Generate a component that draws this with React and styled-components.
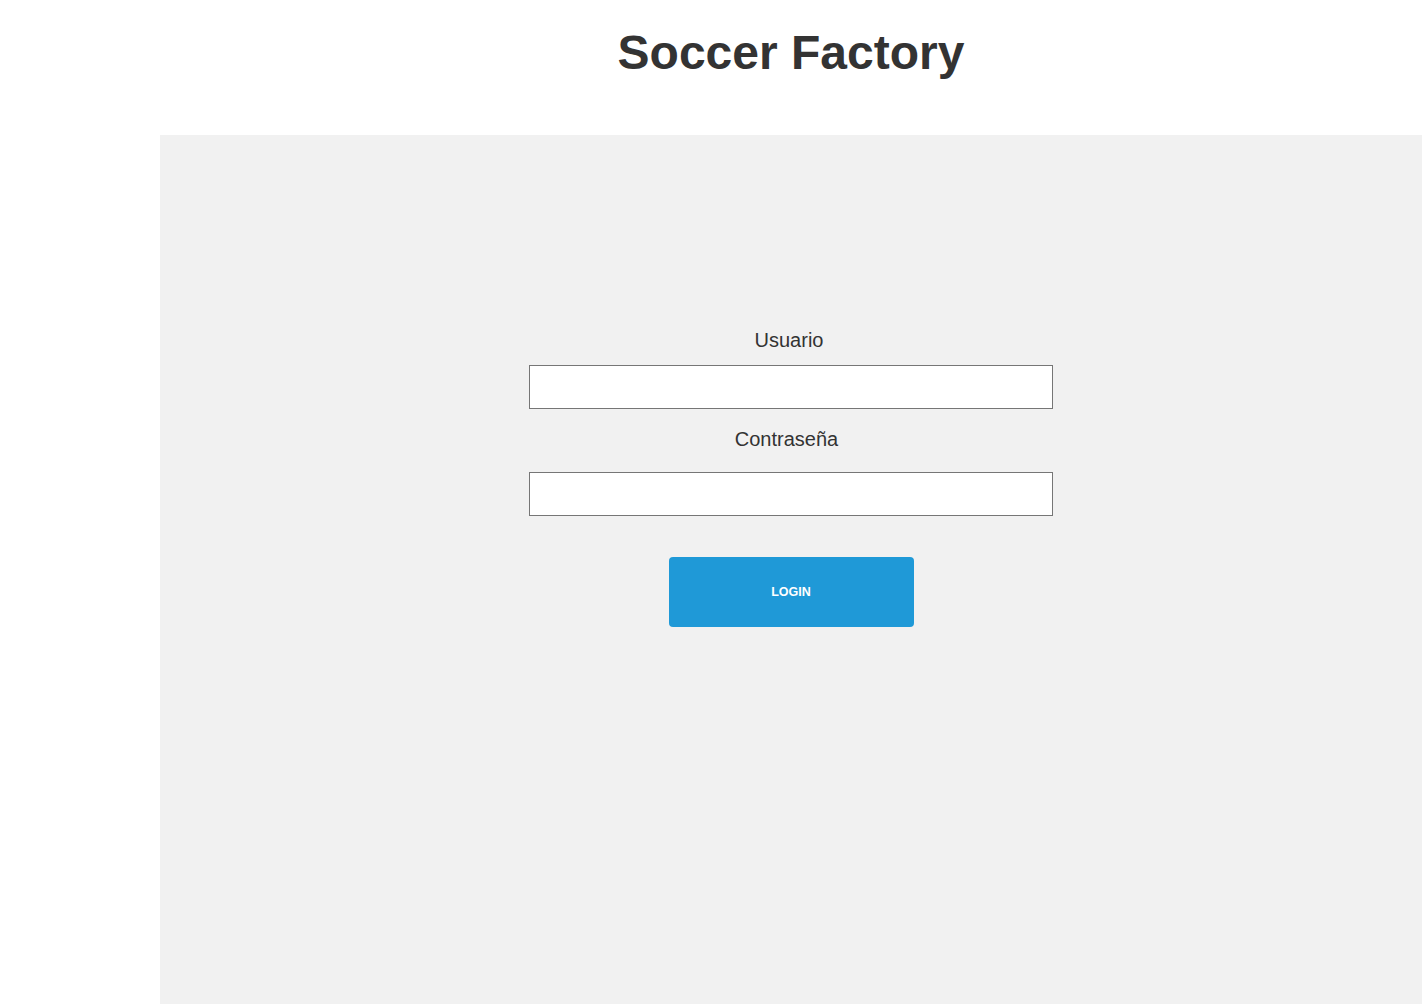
import React from "react";
import styled, { createGlobalStyle } from "styled-components";

const GlobalStyle = createGlobalStyle`
  html, body {
    margin: 0;
    padding: 0;
    background: #ffffff;
    font-family: "Liberation Sans", Arial, sans-serif;
    color: #333333;
  }
  * { box-sizing: border-box; }
`;

const Page = styled.div`
  display: grid;
  grid-template-columns: 160px 1fr;
  min-height: 100vh;
`;

const Sidebar = styled.aside`
  background: #ffffff;
`;

const Main = styled.main`
  display: flex;
  flex-direction: column;
  min-height: 100vh;
`;

const Header = styled.header`
  height: 135px;
  padding-top: 25px;
  display: flex;
  justify-content: center;
`;

const Title = styled.h1`
  margin: 0;
  font-size: 48px;
  line-height: 56px;
  font-weight: 700;
  color: #333333;
`;

const Panel = styled.section`
  flex: 1;
  background: #f1f1f1;
  display: flex;
  flex-direction: column;
  align-items: center;
  padding-top: 194px;
`;

const Form = styled.form`
  width: 524px;
  display: flex;
  flex-direction: column;
  align-items: center;
`;

const Label = styled.label`
  display: block;
  font-size: 20px;
  line-height: 22px;
  color: #333333;
  margin-top: ${(p) => p.$top || 0}px;
  margin-bottom: ${(p) => p.$bottom || 0}px;
  margin-left: ${(p) => p.$shift || 0}px;
`;

const Input = styled.input`
  width: 524px;
  height: 44px;
  border: 1px solid #767676;
  background: #ffffff;
  padding: 0 10px;
  font-size: 16px;
  font-family: inherit;
  outline: none;
`;

const Button = styled.button`
  margin-top: 41px;
  width: 245px;
  height: 70px;
  border: none;
  border-radius: 4px;
  background: #1f99d7;
  color: #ffffff;
  font-family: "Liberation Sans", Arial, sans-serif;
  font-size: 12.5px;
  font-weight: 700;
  cursor: pointer;
`;

export default function App() {
  return (
    <>
      <GlobalStyle />
      <Page>
        <Sidebar />
        <Main>
          <Header>
            <Title>Soccer Factory</Title>
          </Header>
          <Panel>
            <Form onSubmit={(e) => e.preventDefault()}>
              <Label htmlFor="usuario" $bottom={14} $shift={-4}>Usuario</Label>
              <Input id="usuario" type="text" />
              <Label htmlFor="pass" $top={19} $bottom={22} $shift={-9}>Contraseña</Label>
              <Input id="pass" type="password" />
              <Button type="submit">LOGIN</Button>
            </Form>
          </Panel>
        </Main>
      </Page>
    </>
  );
}
